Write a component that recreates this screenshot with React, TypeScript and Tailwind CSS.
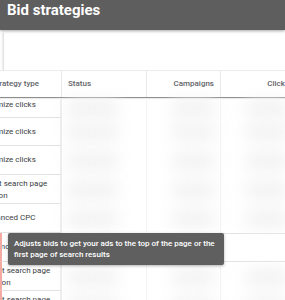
const rows = [
  { label: 'Maximize clicks', h: 'h-[20px]', pad: 'pt-[1px]', ml: '-ml-[21px]', flag: false },
  { label: 'Maximize clicks', h: 'h-[28px]', pad: 'pt-[8px]', ml: '-ml-[21px]', flag: false },
  { label: 'Maximize clicks', h: 'h-[29px]', pad: 'pt-[8px]', ml: '-ml-[21px]', flag: false },
  { label: 'Target search page location', h: 'h-[29px]', pad: 'pt-[3px]', ml: '-ml-[21px]', flag: false },
  { label: 'Enhanced CPC', h: 'h-[29px]', pad: 'pt-[8px]', ml: '-ml-[17px]', flag: false },
  { label: 'Enhanced CPC', h: 'h-[29px]', pad: 'pt-[8px]', ml: '-ml-[19px]', flag: true, hover: true },
  { label: 'Target search page location', h: 'h-[29px]', pad: 'pt-[3px]', ml: '-ml-[20px]', flag: true },
  { label: 'Target search page location', h: 'h-[29px]', pad: 'pt-[3px]', ml: '-ml-[20px]', flag: true },
]

function BlurCell({ w, align }: { w: string; align: 'left' | 'right' }) {
  return (
    <div
      className={`flex h-full items-center border-r border-[#f4f4f4] px-[4px] ${
        align === 'right' ? 'justify-end' : 'justify-start'
      } ${w}`}
    >
      <div className="h-[16px] w-[70%] rounded-full bg-[#f1f1f1] blur-[8px]" />
    </div>
  )
}

export default function App() {
  return (
    <div className="relative h-[300px] w-[285px] overflow-hidden bg-white font-['Roboto',sans-serif]">
      <header className="relative z-10 h-[30px] bg-[#5e5e5e] px-[7px] text-[15px] font-bold leading-[20px] text-white shadow-[0_1px_3px_rgba(0,0,0,0.35)]">
        Bid strategies
      </header>

      <div className="flex h-[40px]">
        <div className="ml-[3px] mt-[3px] h-[37px] w-[1px] bg-[#e2e2e2] shadow-[-1px_0_2px_rgba(0,0,0,0.12)]" />
      </div>

      {/* column headers */}
      <div className="flex h-[28px] w-[320px] border-t border-b border-t-[#ececec] border-b-[#8e8e8e] text-[8px] font-medium text-[#5f6368] shadow-[0_1px_1px_rgba(0,0,0,0.08)]">
        <div className="flex w-[62px] items-center overflow-hidden border-r border-[#e9e9e9]">
          <span className="-ml-[21px] whitespace-nowrap">Bid strategy type</span>
        </div>
        <div className="flex w-[85px] items-center border-r border-[#e9e9e9] px-[6px]">Status</div>
        <div className="flex w-[74px] items-center justify-end border-r border-[#e9e9e9] px-[6px]">Campaigns</div>
        <div className="flex w-[74px] items-center justify-end px-[6px]">Clicks</div>
      </div>

      {/* rows */}
      <div className="flex flex-col">
        {rows.map((r, i) => (
          <div key={i} className={`flex w-[320px] ${r.h}`}>
            <div
              className={`flex w-[62px] shrink-0 overflow-hidden border-b border-r-2 border-b-[#e3e3e3] border-r-[#eeeeee] ${
                r.flag ? 'border-l-[2px] border-l-[#f2aaa3]' : ''
              }`}
            >
              <div className={`w-[78px] shrink-0 text-[8px] leading-[12px] text-[#3c4043] ${r.pad} ${r.ml}`}>
                {r.label}
              </div>
            </div>
            {r.hover ? (
              <div className="flex flex-1 border-y border-[#e3e3e3] bg-white">
                <div className="w-[85px]" />
                <div className="w-[74px]" />
                <div className="w-[74px]" />
              </div>
            ) : (
              <div className="flex flex-1">
                <BlurCell w="w-[85px]" align="left" />
                <BlurCell w="w-[74px]" align="right" />
                <BlurCell w="w-[74px]" align="right" />
              </div>
            )}
          </div>
        ))}
      </div>

      {/* tooltip */}
      <div className="absolute left-[8px] top-[233px] z-20 w-[216px] rounded-[2px] bg-[#5f5f5f] px-[6px] pb-[5px] pt-[5px] text-[8px] font-medium leading-[11px] text-white shadow-[0_1px_3px_rgba(0,0,0,0.3)]">
        Adjusts bids to get your ads to the top of the page or the first page of search results
      </div>
    </div>
  )
}
